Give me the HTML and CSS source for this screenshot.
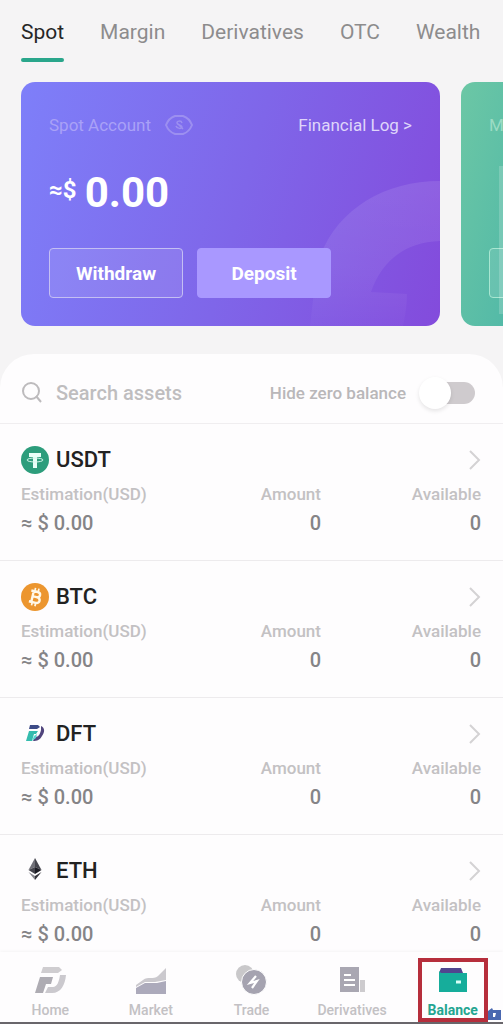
FILE: index.html
```html
<!DOCTYPE html>
<html lang="en">
<head>
<meta charset="utf-8">
<meta name="viewport" content="width=device-width, initial-scale=1">
<title>Balance</title>
<link rel="stylesheet" href="styles.css">
</head>
<body>
<div class="app">
  <nav class="tabs" aria-label="Accounts">
    <a class="tab tab-active" href="#spot">Spot</a>
    <a class="tab" href="#margin">Margin</a>
    <a class="tab" href="#derivatives">Derivatives</a>
    <a class="tab" href="#otc">OTC</a>
    <a class="tab" href="#wealth">Wealth</a>
  </nav>

  <section class="cards">
    <article class="card card-spot">
      <svg class="card-art" viewBox="0 0 130 150" aria-hidden="true">
        <defs>
          <linearGradient id="fade" x1="0" y1="0" x2="0" y2="1">
            <stop offset="0" stop-color="#fff" stop-opacity=".1"/>
            <stop offset=".6" stop-color="#fff" stop-opacity=".07"/>
            <stop offset="1" stop-color="#fff" stop-opacity=".02"/>
          </linearGradient>
        </defs>
        <path d="M130 5C72 5 22 36 7 90L0 150H93Q97 132 97 118L61 116C72 84 96 66 130 65Z" fill="url(#fade)"/>
      </svg>
      <header class="card-head">
        <span class="card-title">Spot Account</span>
        <button class="eye" type="button" aria-label="Hide balance">
          <svg width="28" height="22" viewBox="0 0 28 22" fill="none" stroke="#9c8ff0" stroke-width="2">
            <path d="M1 11C3 6 7 3 10 2H18C21 3 25 6 27 11C25 16 21 19 18 20H10C7 19 3 16 1 11Z"/>
            <path d="M17 9C16 6 12 7 12 9S17 11 17 13 12 15 11 12M12 9L18 15" stroke-width="1.5"/>
          </svg>
        </button>
        <a class="log" href="#log">Financial Log &gt;</a>
      </header>
      <p class="total"><span class="total-sign">≈$</span><span>0.00</span></p>
      <div class="actions">
        <button class="action action-line" type="button">Withdraw</button>
        <button class="action action-fill" type="button">Deposit</button>
      </div>
    </article>
    <article class="card card-margin">
      <header class="card-head"><span class="card-title">Margin Account</span></header>
      <p class="total"></p>
      <div class="actions"><button class="action action-line" type="button" aria-label="Transfer"></button></div>
      <span class="sheen"></span>
    </article>
  </section>

  <main class="panel">
    <div class="filter">
      <label class="search">
        <svg width="22" height="22" viewBox="0 0 22 22" fill="none" stroke="#bdbbbd" stroke-width="2" aria-hidden="true">
          <circle cx="10" cy="9" r="8"/><path d="M15 14L20 20"/>
        </svg>
        <input class="search-input" type="text" placeholder="Search assets" aria-label="Search assets">
      </label>
      <label class="hide" for="hide-zero">Hide zero balance</label>
      <input class="switch" id="hide-zero" type="checkbox">
    </div>

    <section class="asset">
      <a class="asset-head" href="#usdt">
        <svg width="28" height="28" viewBox="0 0 28 28" aria-hidden="true">
          <circle cx="14" cy="14" r="14" fill="#2d9d7c"/>
          <path d="M8 7H20V11H16V22H12V11H8Z" fill="#e9fff8"/>
          <ellipse cx="14" cy="14" rx="8" ry="2" fill="none" stroke="#d5f7ec"/>
        </svg>
        <span class="asset-name">USDT</span>
        <svg class="chevron" width="12" height="20" viewBox="0 0 12 20" aria-hidden="true"><path d="M1 1L10 10L1 19"/></svg>
      </a>
      <dl class="figures">
        <div><dt>Estimation(USD)</dt><dd>≈ $ 0.00</dd></div>
        <div><dt>Amount</dt><dd>0</dd></div>
        <div><dt>Available</dt><dd>0</dd></div>
      </dl>
    </section>

    <section class="asset">
      <a class="asset-head" href="#btc">
        <svg width="28" height="28" viewBox="0 0 28 28" aria-hidden="true">
          <circle cx="14" cy="14" r="14" fill="#ec962f"/>
          <g transform="rotate(13 14 14)" fill="none" stroke="#fff8e8" stroke-width="2.4">
            <path d="M9 8.500H15.500C19.500 8.500 19.500 13.700 15.500 13.700H11.500M15.500 13.700C20.500 13.700 20.500 19.500 16 19.500H9M11.500 8.500V19.500"/>
            <path d="M12.500 5V8M16 5V8M12.500 20V23M16 20V23" stroke-width="1.7"/>
          </g>
        </svg>
        <span class="asset-name">BTC</span>
        <svg class="chevron" width="12" height="20" viewBox="0 0 12 20" aria-hidden="true"><path d="M1 1L10 10L1 19"/></svg>
      </a>
      <dl class="figures">
        <div><dt>Estimation(USD)</dt><dd>≈ $ 0.00</dd></div>
        <div><dt>Amount</dt><dd>0</dd></div>
        <div><dt>Available</dt><dd>0</dd></div>
      </dl>
    </section>

    <section class="asset">
      <a class="asset-head" href="#dft">
        <svg width="28" height="28" viewBox="0 0 28 28" aria-hidden="true">
          <path d="M9 5H17L19 7L16 9H8Z" fill="#3d4b87"/>
          <path d="M20 6C24 8 24 12 21 16C19 20 16 21 12 21L14 17C18 17 19 14 20 10Z" fill="#51457d"/>
          <path d="M8 11H17L15 14H13L11 21H5Z" fill="#35bcae"/>
          <path d="M13 16L16 14L15 18L11 21Z" fill="#5bd5cf"/>
        </svg>
        <span class="asset-name">DFT</span>
        <svg class="chevron" width="12" height="20" viewBox="0 0 12 20" aria-hidden="true"><path d="M1 1L10 10L1 19"/></svg>
      </a>
      <dl class="figures">
        <div><dt>Estimation(USD)</dt><dd>≈ $ 0.00</dd></div>
        <div><dt>Amount</dt><dd>0</dd></div>
        <div><dt>Available</dt><dd>0</dd></div>
      </dl>
    </section>

    <section class="asset">
      <a class="asset-head" href="#eth">
        <svg width="28" height="28" viewBox="0 0 28 28" aria-hidden="true">
          <path d="M14 1L7.500 13L14 10Z" fill="#707078"/><path d="M14 1L20.500 13L14 10Z" fill="#45454d"/>
          <path d="M7.500 13L14 10V17Z" fill="#44444c"/><path d="M20.500 13L14 10V17Z" fill="#1c1c24"/>
          <path d="M7.500 15L14 19V23Z" fill="#85858c"/><path d="M20.500 15L14 19V23Z" fill="#35353c"/>
        </svg>
        <span class="asset-name">ETH</span>
        <svg class="chevron" width="12" height="20" viewBox="0 0 12 20" aria-hidden="true"><path d="M1 1L10 10L1 19"/></svg>
      </a>
      <dl class="figures">
        <div><dt>Estimation(USD)</dt><dd>≈ $ 0.00</dd></div>
        <div><dt>Amount</dt><dd>0</dd></div>
        <div><dt>Available</dt><dd>0</dd></div>
      </dl>
    </section>
  </main>

  <nav class="bottom" aria-label="Main">
    <a class="item" href="#home">
      <svg width="32" height="32" viewBox="0 0 32 32" aria-hidden="true">
        <path d="M9 3H25L28 6L24 9H7Z" fill="#cfcdd0"/>
        <path d="M26 11H32C31 21 27 29 18 29H11L14 23H19C23 23 25 18 26 11Z" fill="#cbc9ce"/>
        <path d="M6 13H19L17 20H12L9 29H1Z" fill="#aeacb3"/>
      </svg>
      <span>Home</span>
    </a>
    <a class="item" href="#market">
      <svg width="32" height="32" viewBox="0 0 32 32" aria-hidden="true">
        <path d="M1 21L8 16C13 12 18 16 23 12L31 4V16L20 18H10L1 23Z" fill="#cbc9ce"/>
        <path d="M1 24L10 19H22L31 17V30H1Z" fill="#acaabb"/>
      </svg>
      <span>Market</span>
    </a>
    <a class="item" href="#trade">
      <svg width="32" height="32" viewBox="0 0 32 32" aria-hidden="true">
        <circle cx="10" cy="10" r="9" fill="#c9c8ca"/>
        <circle cx="19" cy="18" r="12.500" fill="#a5a3b0" stroke="#fff"/>
        <path d="M21 12L15 19L22 17L17 24" fill="none" stroke="#fff" stroke-width="2.200"/>
      </svg>
      <span>Trade</span>
    </a>
    <a class="item" href="#futures">
      <svg width="32" height="32" viewBox="0 0 32 32" aria-hidden="true">
        <path d="M4 3H23V28H4Z" fill="#a9a7b2"/><path d="M24 16H29V28H24Z" fill="#cdcbce"/>
        <path d="M8 11H15M8 16H19M8 21H19" stroke="#fff" stroke-width="2"/>
      </svg>
      <span>Derivatives</span>
    </a>
    <a class="item item-active" href="#balance" aria-current="page">
      <svg width="32" height="32" viewBox="0 0 32 32" aria-hidden="true">
        <path d="M4 6H24L26 11H2Z" fill="#51458f"/>
        <path d="M2 9L4 11H30V30H2Z" fill="#16ad9b"/>
        <path d="M19 20H24" stroke="#d7fff7" stroke-width="3"/>
      </svg>
      <span>Balance</span>
      <svg class="corner" width="14" height="12" viewBox="0 0 14 12" aria-hidden="true">
        <path d="M0 3L4 0L5 2H13V12H0Z" fill="#4968b0"/><path d="M5 5H8L7 9H5Z" fill="#fff"/>
      </svg>
    </a>
  </nav>
</div>
</body>
</html>
```
FILE: styles.css
```css
* { box-sizing: border-box; }
body, p, dl, dd { margin: 0; }
body {
  background: #f5f4f5;
  color: #222;
  font-family: Roboto, "Liberation Sans", sans-serif;
}
a { color: inherit; text-decoration: none; }
button, input { font: inherit; margin: 0; }
svg { display: block; flex: none; }

.app {
  display: flex;
  flex-direction: column;
  height: 100vh;
  overflow: hidden;
}

.tabs {
  display: flex;
  gap: 36px;
  padding: 18px 20px 0 21px;
  flex: none;
  overflow: hidden;
}
.tab {
  padding-bottom: 16px;
  color: #8d8c8d;
  font-size: 21px;
  line-height: 28px;
  white-space: nowrap;
}
.tab-active {
  padding-bottom: 12px;
  color: #262626;
}
.tab-active::after {
  content: "";
  display: block;
  height: 4px;
  margin-top: 12px;
  border-radius: 2px;
  background: #2aa68b;
}

.cards {
  display: flex;
  flex: none;
  gap: 21px;
  padding: 8px 0 28px 21px;
  overflow: hidden;
}
.card {
  position: relative;
  flex: 0 0 calc(100% - 63px);
  padding: 28px;
  border-radius: 14px;
  color: #fff;
  overflow: hidden;
}
.card-spot { background: linear-gradient(105deg, #7e7ff9 0%, #7f66e9 52%, #834bdc 100%); }
.card-margin { background: linear-gradient(105deg, #6cc7a5, #4bb5a8 30%); }
.card-art {
  position: absolute;
  right: 0;
  bottom: 0;
  width: 130px;
}
.card-head {
  position: relative;
  display: flex;
  align-items: center;
  height: 30px;
}
.card-title { color: #a9a1f7; font-size: 17px; }
.card-margin .card-title { color: #9bdcc4; }
.eye {
  margin-left: 14px;
  padding: 0;
  border: 0;
  background: none;
}
.log { margin-left: auto; color: #dfd5fa; font-size: 17px; }
.total {
  display: flex;
  align-items: flex-start;
  gap: 8px;
  height: 50px;
  margin-top: 28px;
  font-size: 42px;
  font-weight: 700;
  line-height: 50px;
}
.total-sign { font-size: 24px; line-height: 44px; }
.actions { position: relative; display: flex; gap: 14px; margin-top: 30px; }
.action {
  width: 134px;
  height: 50px;
  padding: 0;
  border: 1px solid #c4bff3;
  border-radius: 4px;
  background: rgb(255 255 255 / 10%);
  color: #fff;
  font-size: 19px;
  font-weight: 700;
}
.action-fill { border-color: #a998ff; background: #a998ff; }
.card-margin .action { border-color: #a8e6d1; }
.sheen {
  position: absolute;
  top: 84px;
  bottom: 12px;
  left: 38px;
  width: 40px;
  background: rgb(255 255 255 / 18%);
}

.panel {
  flex: 1;
  min-height: 0;
  overflow: hidden;
  border-radius: 34px 34px 0 0;
  background: #fefdfe;
}
.filter {
  display: flex;
  align-items: center;
  height: 70px;
  padding: 8px 28px 0 21px;
  border-bottom: 1px solid #f0eef0;
}
.search {
  display: flex;
  flex: 1;
  align-items: center;
  gap: 13px;
  min-width: 0;
}
.search-input {
  flex: 1;
  min-width: 0;
  padding: 0;
  border: 0;
  outline: 0;
  background: none;
  font-size: 20px;
  font-weight: 500;
}
.search-input::placeholder { color: #bfbdbf; opacity: 1; }
.hide { color: #b9b7b9; font-size: 17px; font-weight: 500; }
.switch {
  appearance: none;
  position: relative;
  width: 50px;
  height: 22px;
  margin-left: 19px;
  border-radius: 11px;
  background: #cfcbce;
}
.switch::before {
  content: "";
  position: absolute;
  top: -5px;
  left: -6px;
  width: 32px;
  height: 32px;
  border-radius: 50%;
  background: #fff;
  box-shadow: 0 2px 4px rgb(0 0 0 / 10%);
}

.asset {
  height: 137px;
  padding: 20px 22px 0 21px;
  border-bottom: 1px solid #edebed;
}
.asset-head { display: flex; align-items: center; gap: 7px; height: 32px; }
.asset-name { font-size: 22px; font-weight: 500; line-height: 32px; }
.chevron {
  margin-left: auto;
  fill: none;
  stroke: #d4d2d4;
  stroke-width: 2;
}
.figures {
  display: grid;
  grid-template-columns: 1fr 1fr 160px;
  margin-top: 5px;
  text-align: right;
  font-weight: 500;
}
.figures div:first-child { text-align: left; }
.figures dt { color: #c3c1c3; font-size: 17px; line-height: 26px; }
.figures dd { color: #858487; font-size: 20px; line-height: 32px; }

.bottom {
  display: grid;
  grid-template-columns: repeat(5, 1fr);
  flex: none;
  padding-top: 6px;
  border-bottom: 2px solid #69666b;
  background: #fefdfe;
  box-shadow: 0 -1px 3px rgb(0 0 0 / 4%);
}
.item {
  position: relative;
  display: flex;
  flex-direction: column;
  align-items: center;
  gap: 6px;
  padding-top: 6px;
  color: #c3c1c4;
  font-size: 14px;
  font-weight: 500;
  line-height: 16px;
}
.item-active {
  justify-self: center;
  gap: 8px;
  width: 70px;
  padding-top: 0;
  border: 4px solid #b62e3c;
  color: #24a591;
  font-weight: 700;
}
.corner { position: absolute; right: -18px; bottom: -2px; }
```
